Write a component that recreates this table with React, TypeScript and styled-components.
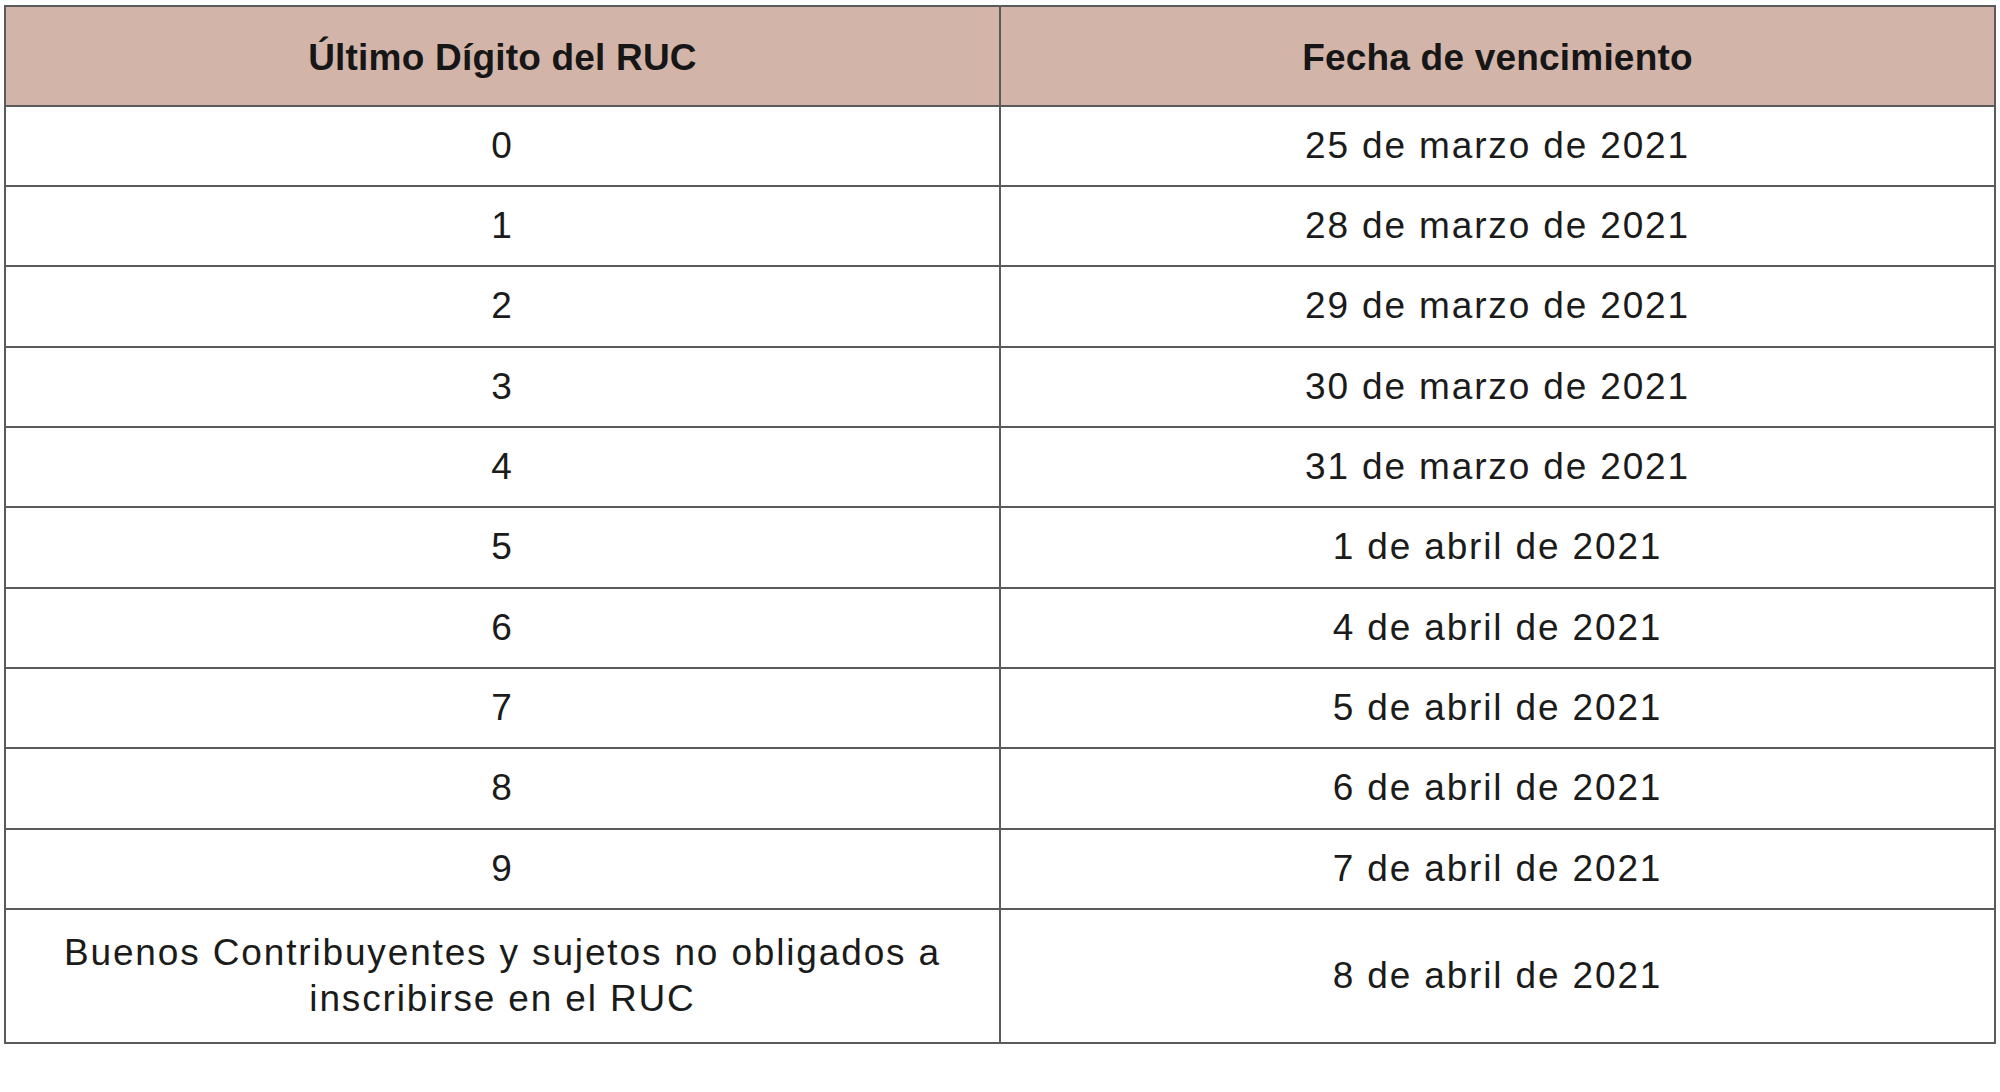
import React from "react";
import styled, { createGlobalStyle } from "styled-components";

const Global = createGlobalStyle`
  html, body { margin: 0; padding: 0; background: #ffffff; }
  body { font-family: "Liberation Sans", Arial, sans-serif; }
`;

const Page = styled.div`
  padding: 5px 0 0 4px;
  width: 2000px;
  box-sizing: border-box;
`;

const Table = styled.table`
  width: 1992px;
  border-collapse: collapse;
  table-layout: fixed;
  color: #1b1b1b;
`;

const HeadCell = styled.th`
  background: #d2b4a9;
  border: 2px solid #5a5a5a;
  height: 99.5px;
  padding: 5px 0 0;
  box-sizing: border-box;
  font-family: "Liberation Sans", Arial, sans-serif;
  font-weight: 700;
  font-size: 37px;
  letter-spacing: 0.2px;
  text-align: center;
  vertical-align: middle;
  color: #161616;
`;

const Cell = styled.td<{ $tall?: boolean }>`
  border: 2px solid #5a5a5a;
  height: ${(p) => (p.$tall ? "132px" : "78.35px")};
  padding: 0 20px;
  font-family: "Liberation Sans", Arial, sans-serif;
  font-weight: 400;
  font-size: 37px;
  letter-spacing: 1.85px;
  line-height: 46px;
  text-align: center;
  vertical-align: middle;
  background: #ffffff;
`;

const rows: [string, string][] = [
  ["0", "25 de marzo de 2021"],
  ["1", "28 de marzo de 2021"],
  ["2", "29 de marzo de 2021"],
  ["3", "30 de marzo de 2021"],
  ["4", "31 de marzo de 2021"],
  ["5", "1 de abril de 2021"],
  ["6", "4 de abril de 2021"],
  ["7", "5 de abril de 2021"],
  ["8", "6 de abril de 2021"],
  ["9", "7 de abril de 2021"],
];

export default function App() {
  return (
    <>
      <Global />
      <Page>
        <Table>
          <thead>
            <tr>
              <HeadCell>Último Dígito del RUC</HeadCell>
              <HeadCell>Fecha de vencimiento</HeadCell>
            </tr>
          </thead>
          <tbody>
            {rows.map(([d, f]) => (
              <tr key={d}>
                <Cell>{d}</Cell>
                <Cell>{f}</Cell>
              </tr>
            ))}
            <tr>
              <Cell $tall>
                Buenos Contribuyentes y sujetos no obligados a
                <br />
                inscribirse en el RUC
              </Cell>
              <Cell $tall>8 de abril de 2021</Cell>
            </tr>
          </tbody>
        </Table>
      </Page>
    </>
  );
}
